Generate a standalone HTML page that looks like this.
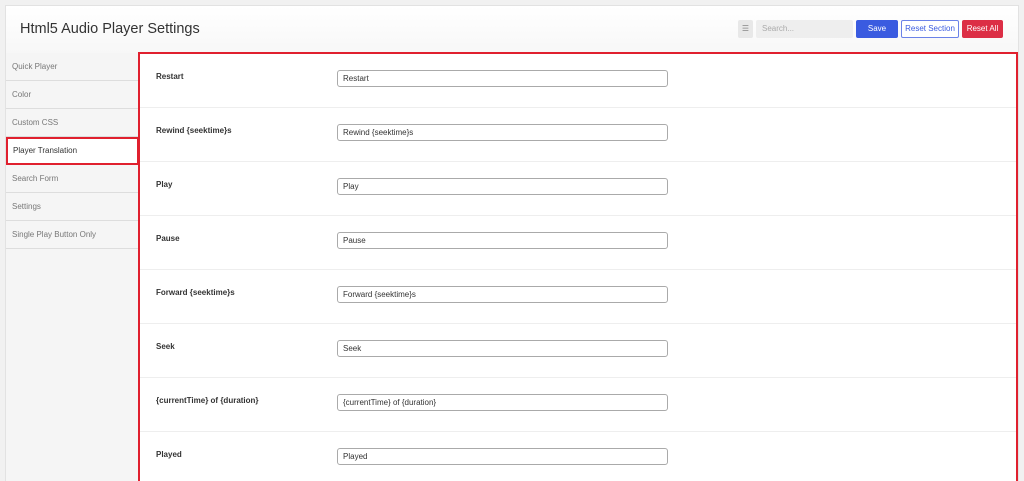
<!DOCTYPE html>
<html><head><style>
html,body{margin:0;height:481px;overflow:hidden}
body{background:#f1f1f1;font-family:"Liberation Sans",sans-serif;width:1024px;position:relative}
.wrap{position:absolute;left:5px;top:5px;width:1014px;height:480px;background:#fff;border:1px solid #e2e2e2;box-sizing:border-box}
.hdr{position:absolute;left:0;top:0;width:100%;height:47px;background:linear-gradient(#fff,#f7f7f7);border-bottom:1px solid #e5e5e5}
.hdr h1{position:absolute;left:14px;top:15px;margin:0;font-size:14.5px;font-weight:normal;color:#333}
.side{position:absolute;left:0;top:47px;width:133px;height:440px;background:#f5f5f5;border-right:1px solid #ddd}
.side div{border-bottom:1px solid #ddd;font-size:8px;color:#777;line-height:28px;padding-left:6px;box-sizing:border-box;height:28px}
.side .act{background:#fff;color:#333;border:2px solid #e0202e;padding-left:5px;line-height:24px}
.main{position:absolute;left:132px;top:46px;width:880px;height:440px;border:2px solid #e0202e;background:#fff;box-sizing:border-box}
.row{height:53px;border-bottom:1px solid #eee;position:relative}
.row b{position:absolute;left:16px;top:18px;font-size:8px;color:#333}
.row span{position:absolute;left:197px;top:16px;width:331px;height:17px;border:1px solid #aaa;border-radius:3px;font-size:8px;line-height:16px;padding-left:5px;box-sizing:border-box;color:#333}
.btn{position:absolute;top:14px;height:18px;font-size:8px;line-height:18px;text-align:center;border-radius:2px;box-sizing:border-box}
</style></head><body>
<div class="wrap">
<div class="hdr"><h1>Html5 Audio Player Settings</h1>
<div class="btn" style="left:732px;width:15px;background:#e8e8e8;color:#888">☰</div>
<div class="btn" style="left:750px;width:97px;background:#eee;color:#aaa;text-align:left;padding-left:6px">Search...</div>
<div class="btn" style="left:850px;width:42px;background:#3a5be0;color:#fff">Save</div>
<div class="btn" style="left:895px;width:58px;background:#fff;border:1px solid #6b82e8;color:#3a5be0;line-height:16px">Reset Section</div>
<div class="btn" style="left:956px;width:41px;background:#dc2e45;color:#fff">Reset All</div>
</div>
<div class="side">
<div>Quick Player</div><div>Color</div><div>Custom CSS</div><div class="act">Player Translation</div><div>Search Form</div><div>Settings</div><div>Single Play Button Only</div>
</div>
<div class="main">
<div class="row"><b>Restart</b><span>Restart</span></div>
<div class="row"><b>Rewind {seektime}s</b><span>Rewind {seektime}s</span></div>
<div class="row"><b>Play</b><span>Play</span></div>
<div class="row"><b>Pause</b><span>Pause</span></div>
<div class="row"><b>Forward {seektime}s</b><span>Forward {seektime}s</span></div>
<div class="row"><b>Seek</b><span>Seek</span></div>
<div class="row"><b>{currentTime} of {duration}</b><span>{currentTime} of {duration}</span></div>
<div class="row"><b>Played</b><span>Played</span></div>
</div>
</div>
</body></html>
